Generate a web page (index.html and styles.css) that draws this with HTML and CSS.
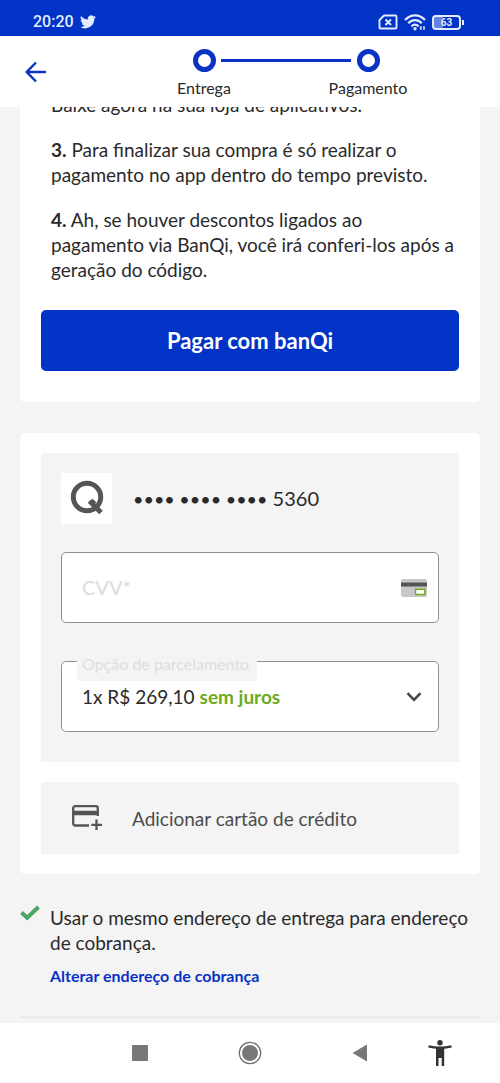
FILE: index.html
```html
<!DOCTYPE html>
<html lang="pt-BR">
<head>
<meta charset="utf-8">
<meta name="viewport" content="width=device-width, initial-scale=1">
<title>Pagamento</title>
<link rel="stylesheet" href="styles.css">
</head>
<body>
<div class="status">
  <div class="status-group">
    <span class="clock">20:20</span>
    <svg width="16" height="14" viewBox="0 0 24 20" fill="#e4ebff" aria-hidden="true"><path d="M23.9 2.4c-.9.4-1.800.6-2.800.8 1-.6 1.800-1.600 2.200-2.700-1 .6-2 1-3.100 1.200A4.900 4.900 0 0 0 11.800 6.100C7.700 5.900 4.100 4 1.700.9a4.900 4.900 0 0 0 1.500 6.600c-.8 0-1.600-.3-2.200-.6v.1c0 2.400 1.700 4.400 3.900 4.800-.7.200-1.500.2-2.200.1.600 2 2.400 3.400 4.600 3.400A9.900 9.900 0 0 1 0 17.300 14 14 0 0 0 21.500 4.900c1-.7 1.800-1.500 2.400-2.500z"/></svg>
  </div>
  <div class="status-group">
    <svg width="20" height="16" viewBox="0 0 20 16" fill="none" stroke="#e4ebff" stroke-width="1.900" aria-hidden="true"><path d="M6 1.500h11.500a1 1 0 0 1 1 1v11a1 1 0 0 1-1 1h-15a1 1 0 0 1-1-1V6z" stroke-linejoin="round"/><path d="M7.500 5.500l5.500 5.500M13 5.500l-5.500 5.500"/></svg>
    <svg width="22" height="17" viewBox="0 0 22 17" fill="none" stroke="#e4ebff" stroke-width="2.300" aria-hidden="true"><path d="M1 6C7-.2 15-.2 21 6M4.200 9.200c4-4 9.600-4 13.600 0M7.400 12.300c2.200-2 5-2 7.200 0"/><circle cx="11" cy="14.800" r="1.700" fill="#e4ebff" stroke="none"/><path d="M17 12v4M20 12v4M15.500 14h2M19 14h2" stroke-width="1.200"/></svg>
    <div class="battery"><span class="battery-body">63</span><span class="battery-tip"></span></div>
  </div>
</div>
<header class="header">
  <button class="back" type="button" aria-label="Voltar">
    <svg width="22" height="22" viewBox="0 0 22 22" fill="none" stroke="#0a33c4" stroke-width="2.400"><path d="M21 11H2M11 1.500L1.700 11l9.300 9.500"/></svg>
  </button>
  <ol class="steps">
    <li class="step"><span class="ring"></span><span>Entrega</span></li>
    <li class="step"><span class="ring"></span><span>Pagamento</span></li>
  </ol>
</header>
<main class="content">
  <section class="card instructions">
    <div class="text">
      <p>Baixe agora na sua loja de aplicativos.</p>
      <p><b>3.</b> Para finalizar sua compra é só realizar o pagamento no app dentro do tempo previsto.</p>
      <p><b>4.</b> Ah, se houver descontos ligados ao pagamento via BanQi, você irá conferi-los após a geração do código.</p>
    </div>
    <button class="pay" type="button">Pagar com banQi</button>
  </section>
  <section class="card">
    <div class="panel">
      <div class="card-number">
        <span class="brand"><svg width="34" height="38" viewBox="0 0 34 38" fill="none" stroke="#555" aria-hidden="true"><circle cx="17" cy="17" r="13.700" stroke-width="5"/><path d="M19.500 21l3.500 3.500M24.500 20.500l-3.500 3.500M22 23.500l9 9" stroke-width="5"/></svg></span>
        <span class="digits"><span class="dots">•••• •••• ••••</span> 5360</span>
      </div>
      <div class="field">
        <input class="cvv" type="text" inputmode="numeric" placeholder="CVV*" aria-label="CVV">
        <svg width="26" height="18" viewBox="0 0 26 18" aria-hidden="true"><rect width="26" height="18" rx="2" fill="#c8c8c8"/><path d="M0 3.500h26v4H0z" fill="#555"/><path d="M14.500 10.200h9.300v5.300h-9.300z" fill="#fff" stroke="#72ad23" stroke-width="1.500"/></svg>
      </div>
      <div class="field">
        <label class="legend" for="parcelas">Opção de parcelamento</label>
        <div class="choice">
          <select class="select" id="parcelas"><option>1x R$ 269,10</option></select>
          <strong class="free">sem juros</strong>
        </div>
        <svg class="chevron" width="16" height="10" viewBox="0 0 16 10" fill="none" stroke="#484848" stroke-width="2.600" aria-hidden="true"><path d="M1.500 1.200L8 7.800l6.500-6.600"/></svg>
      </div>
    </div>
    <button class="add" type="button">
      <svg width="30" height="26" viewBox="0 0 30 26" fill="none" stroke="#555" stroke-width="2.300" aria-hidden="true"><path d="M17 20.500H3.200a2 2 0 0 1-2-2V3.200a2 2 0 0 1 2-2h20.600a2 2 0 0 1 2 2V11"/><path d="M1 8h25" stroke-width="4.500"/><path d="M24.500 14.500v10.500M19.300 19.800H30"/></svg>
      <span>Adicionar cartão de crédito</span>
    </button>
  </section>
  <section class="billing">
    <svg width="20" height="16" viewBox="0 0 20 16" fill="none" stroke="#4aa564" stroke-width="4" aria-hidden="true"><path d="M1.500 7.500l5.700 5.300L18.500 2"/></svg>
    <div>
      <p>Usar o mesmo endereço de entrega para endereço de cobrança.</p>
      <a class="link" href="#">Alterar endereço de cobrança</a>
    </div>
  </section>
  <hr class="rule">
</main>
<nav class="nav" aria-label="Sistema">
  <button class="key" type="button" aria-label="Recentes"><svg width="16" height="16"><rect width="16" height="16" rx="1" fill="#787878"/></svg></button>
  <button class="key" type="button" aria-label="Início"><svg width="24" height="24"><circle cx="12" cy="12" r="10.700" fill="none" stroke="#707070" stroke-width="1.300"/><circle cx="12" cy="12" r="8" fill="#787878"/></svg></button>
  <button class="key" type="button" aria-label="Voltar"><svg width="16" height="18"><path d="M.5 9L15 .5v17z" fill="#787878"/></svg></button>
  <button class="key" type="button" aria-label="Acessibilidade"><svg width="24" height="26" viewBox="0 0 24 26" fill="#333"><circle cx="12" cy="2.700" r="2.700"/><path d="M.8 5.200c7 1.800 15.400 1.800 22.400 0l.5 2.300c-2.500.7-5 1-7.500 1.300V26h-2.500v-8h-3.200v8H8V8.800C5.400 8.500 2.800 8.200.3 7.500z"/></svg></button>
</nav>
</body>
</html>
```
FILE: styles.css
```css
* { box-sizing: border-box; }
body {
  margin: 0;
  min-height: 100vh;
  display: flex;
  flex-direction: column;
  background: #fff;
  color: #2a2a2a;
  font-family: Lato, "Noto Sans", sans-serif;
  font-size: 19px;
  line-height: 25px;
}
p { margin: 0; }
button, input, select { font: inherit; color: inherit; }
button { border: 0; padding: 0; background: none; cursor: pointer; }
svg { display: block; flex: none; }

.status {
  height: 36px;
  padding: 8px 36px 0 33px;
  display: flex;
  justify-content: space-between;
  background: #0033c6;
  color: #e4ebff;
}
.status-group { display: flex; align-items: center; gap: 6px; }
.clock { font: 500 16px/20px Roboto, sans-serif; }
.battery { display: flex; align-items: center; gap: 1px; }
.battery-body {
  width: 29px;
  border: 2px solid #e4ebff;
  border-radius: 4px;
  font: 700 10px/11px Roboto, sans-serif;
  text-align: center;
  background: linear-gradient(90deg, #6283de 35%, #0033c6 35%);
}
.battery-tip { width: 2px; height: 5px; background: #e4ebff; }

.header {
  height: 71px;
  display: flex;
  background: #fff;
  position: relative;
  z-index: 1;
}
.back { width: 72px; display: flex; justify-content: center; align-items: center; }
.steps {
  flex: 1;
  margin: 0 50px;
  padding: 13px 0 0;
  display: flex;
  justify-content: center;
  list-style: none;
  font-size: 16px;
}
.step {
  width: 164px;
  display: flex;
  flex-direction: column;
  align-items: center;
  gap: 3px;
  position: relative;
}
.ring { width: 23px; height: 23px; border: 5px solid #0a33c4; border-radius: 50%; }
.step + .step::before {
  content: "";
  position: absolute;
  top: 10px;
  right: 50%;
  width: 130px;
  height: 3px;
  margin-right: 17px;
  background: #0a33c4;
}

.content {
  flex: 1;
  overflow: hidden;
  padding: 0 20px;
  background: #f4f4f4;
}
.card {
  margin-bottom: 31px;
  padding: 20px 21px;
  display: flex;
  flex-direction: column;
  gap: 20px;
  background: #fff;
  border-radius: 5px;
}
.instructions { margin-top: -35px; padding-bottom: 31px; gap: 28px; }
.text { padding: 0 5px 0 10px; display: flex; flex-direction: column; gap: 20px; }
.pay {
  padding: 18px;
  border-radius: 5px;
  background: #0033c6;
  color: #fff;
  font-size: 22px;
  font-weight: 700;
}
.panel {
  padding: 20px 20px 30px;
  display: flex;
  flex-direction: column;
  background: #f4f4f4;
  border-radius: 4px 4px 0 0;
}
.card-number { display: flex; align-items: center; gap: 21px; margin-bottom: 28px; }
.brand {
  width: 51px;
  height: 51px;
  display: flex;
  align-items: center;
  justify-content: center;
  background: #fff;
}
.digits { font-size: 20px; }
.dots { font-size: 18px; }
.field {
  position: relative;
  height: 71px;
  padding: 0 11px 0 20px;
  display: flex;
  align-items: center;
  justify-content: space-between;
  background: #fff;
  border: 1px solid #8f8f8f;
  border-radius: 5px;
}
.field + .field { margin-top: 38px; }
.cvv { flex: 1; min-width: 0; padding: 0; border: 0; outline: 0; background: none; font-size: 20px; }
.cvv::placeholder { color: #dcdcdc; opacity: 1; }
.legend {
  position: absolute;
  top: -8px;
  left: 15px;
  height: 27px;
  padding: 0 8px 0 5px;
  background: #f4f4f4;
  color: #dedede;
  font-size: 16px;
  line-height: 20px;
}
.choice { display: flex; align-items: center; gap: 5px; }
.select {
  appearance: none;
  field-sizing: content;
  padding: 0;
  border: 0;
  background: none;
}
.free { color: #6cab1e; }
.chevron { margin-right: 5px; }
.add {
  padding: 23px 31px;
  display: flex;
  align-items: center;
  gap: 30px;
  background: #f4f4f4;
  border-radius: 4px 4px 0 0;
  color: #4c4c4c;
}
.billing { display: flex; gap: 10px; }
.link {
  display: inline-block;
  margin-top: 8px;
  color: #0a33c4;
  font-size: 16px;
  font-weight: 700;
  text-decoration: none;
}
.rule { margin: 28px 0 0; border: 0; border-top: 2px solid #ebebeb; }

.nav {
  height: 60px;
  padding: 0 35px 0 85px;
  display: grid;
  grid-template-columns: repeat(3, 1fr) 50px;
  background: #fff;
}
.key { display: flex; align-items: center; justify-content: center; }
```
